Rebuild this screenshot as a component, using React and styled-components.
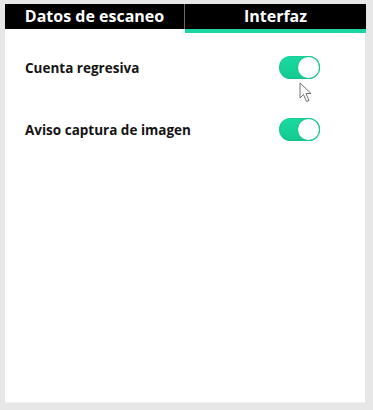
import React, { useState } from "react";
import styled, { createGlobalStyle } from "styled-components";

const GlobalStyle = createGlobalStyle`
  html, body {
    margin: 0;
    padding: 0;
    background: #e7e7e7;
    font-family: "Open Sans", "Liberation Sans", sans-serif;
  }
`;

const Page = styled.div`
  width: 373px;
  height: 410px;
  padding: 4px 8px 0 5px;
  box-sizing: border-box;
`;

const Panel = styled.div`
  position: relative;
  width: 360px;
  height: 398px;
  background: #ffffff;
  box-shadow: 0 1px 0 #f0f0f0;
  display: flex;
  flex-direction: column;
`;

const TabBar = styled.div`
  display: flex;
  align-items: flex-start;
  height: 29px;
`;

const Tab = styled.div`
  flex: ${(p) => (p.$active ? "0 0 181px" : "0 0 179px")};
  height: 25px;
  background: #000;
  color: #fff;
  font-weight: 700;
  font-size: 16px;
  line-height: 25px;
  text-align: center;
  border-right: ${(p) => (p.$active ? "none" : "1px solid #6a6a6a")};
  border-bottom: ${(p) =>
    p.$active ? "4px solid #1bd6a2" : "none"};
`;

const Content = styled.div`
  display: flex;
  flex-direction: column;
  gap: 39px;
  padding: 23px 45px 0 20px;
`;

const Row = styled.div`
  display: flex;
  align-items: center;
  justify-content: space-between;
  height: 23px;
`;

const Label = styled.span`
  font-size: 13.5px;
  font-weight: 700;
  color: #141414;
`;

const Toggle = styled.button`
  position: relative;
  width: 41px;
  height: 23px;
  border: none;
  padding: 0;
  border-radius: 12px;
  cursor: pointer;
  background: ${(p) =>
    p.$on ? "linear-gradient(180deg, #19dba0 0%, #14c98f 100%)" : "#ccc"};
  box-shadow: inset 0 0 0 1px rgba(0, 150, 100, 0.15);
`;

const Knob = styled.span`
  position: absolute;
  top: 1px;
  left: ${(p) => (p.$on ? "19px" : "1px")};
  width: 21px;
  height: 21px;
  border-radius: 50%;
  background: #fff;
  box-shadow: 0 0 0 1px #18c892;
`;

const Cursor = styled.svg`
  position: absolute;
  left: 294px;
  top: 78px;
`;

const Switch = ({ on, onClick }) => (
  <Toggle $on={on} onClick={onClick}>
    <Knob $on={on} />
  </Toggle>
);

const App = () => {
  const [countdown, setCountdown] = useState(true);
  const [notice, setNotice] = useState(true);

  return (
    <Page>
      <GlobalStyle />
      <Panel>
        <TabBar>
          <Tab>Datos de escaneo</Tab>
          <Tab $active>Interfaz</Tab>
        </TabBar>
        <Content>
          <Row>
            <Label>Cuenta regresiva</Label>
            <Switch on={countdown} onClick={() => setCountdown(!countdown)} />
          </Row>
          <Row>
            <Label>Aviso captura de imagen</Label>
            <Switch on={notice} onClick={() => setNotice(!notice)} />
          </Row>
        </Content>
        <Cursor width="15" height="21" viewBox="0 0 15 21">
          <path
            d="M1 1 L1 16 L4.5 12.5 L7.5 19.5 L10 18.5 L7 11.5 L12 11.5 Z"
            fill="#fff"
            stroke="#707070"
            strokeWidth="1"
            strokeLinejoin="round"
          />
        </Cursor>
      </Panel>
    </Page>
  );
};

export default App;
